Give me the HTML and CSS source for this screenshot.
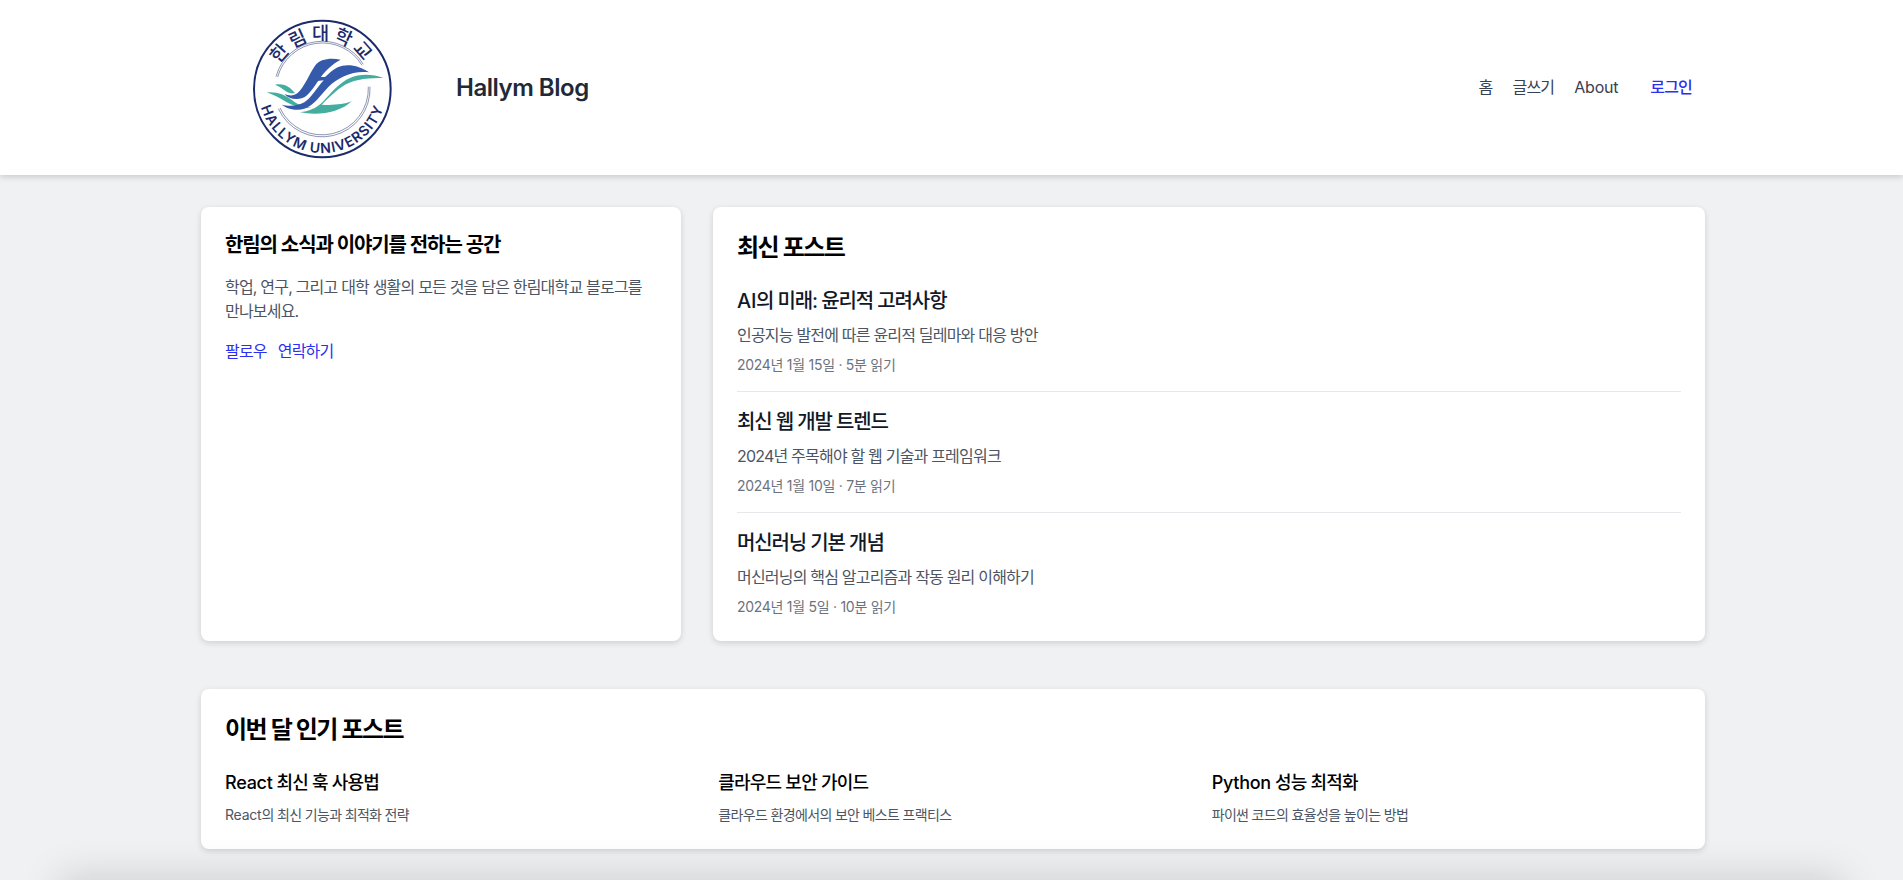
FILE: index.html
```html
<!DOCTYPE html>
<html lang="ko">
<head>
<meta charset="utf-8">
<title>Hallym Blog</title>
<link rel="stylesheet" href="styles.css">
</head>
<body>
<div class="page">
  <header class="site-header">
    <div class="brand">
      <svg class="logo" viewBox="0 0 480 450" role="img" aria-label="한림대학교 HALLYM UNIVERSITY">
        <defs>
          <path id="arc-top" d="M84 228 A148 148 0 0 1 380 228"/>
          <path id="arc-bottom" d="M40 228 A192 192 0 0 0 424 228"/>
        </defs>
        <circle class="ring" cx="232" cy="228" r="205"/>
        <path class="thin" d="M93 191 A144 144 0 0 1 355 154"/>
        <path class="thin" d="M98 192 A139 139 0 0 1 351 157"/>
        <path class="thin" d="M100 287 A144 144 0 0 0 375 221"/>
        <path class="thin" d="M105 285 A139 139 0 0 0 370 221"/>
        <text class="logo-ko"><textPath href="#arc-top" startOffset="50%" text-anchor="middle">한림대학교</textPath></text>
        <text class="logo-en"><textPath href="#arc-bottom" startOffset="50%" text-anchor="middle">HALLYM UNIVERSITY</textPath></text>
        <path class="teal" d="M90 215 C105 212 120 214 135 225 C142 232 146 236 150 240 C138 243 128 240 118 232 C108 224 100 219 90 215Z"/>
        <path class="teal" d="M65 238 C95 235 120 245 140 260 C158 275 180 283 200 282 C180 288 150 282 125 268 C105 255 85 245 65 238Z"/>
        <path class="blue" d="M287 140 C255 134 225 138 210 158 C192 184 178 222 158 240 C146 250 130 248 118 243 C130 256 150 262 170 256 C192 248 206 222 222 200 C236 178 262 152 287 140Z"/>
        <path class="blue" d="M372 178 C345 158 305 150 278 163 C262 171 250 184 240 192 L224 192 L216 204 L236 202 C214 226 200 254 178 268 C158 280 130 280 110 275 C126 288 156 294 178 287 C206 278 226 248 250 222 C280 192 325 172 372 178Z"/>
        <path class="teal" d="M415 195 C380 182 345 182 315 195 C285 207 258 240 235 265 C215 286 190 296 165 298 C200 305 240 303 270 293 C290 287 308 277 320 265 C295 275 262 277 230 275 C250 255 272 232 300 215 C335 197 375 195 415 195Z"/>
      </svg>
      <h1 class="site-title">Hallym Blog</h1>
    </div>
    <nav class="site-nav">
      <a class="nav-link" href="#">홈</a>
      <a class="nav-link" href="#">글쓰기</a>
      <a class="nav-link latin" href="#">About</a>
      <a class="nav-login" href="#">로그인</a>
    </nav>
  </header>

  <main class="content">
    <div class="top-row">
      <section class="card intro">
        <h2 class="intro-title">한림의 소식과 이야기를 전하는 공간</h2>
        <p class="intro-text">학업, 연구, 그리고 대학 생활의 모든 것을 담은 한림대학교 블로그를 만나보세요.</p>
        <div class="intro-links">
          <a class="link" href="#">팔로우</a>
          <a class="link" href="#">연락하기</a>
        </div>
      </section>

      <section class="card latest">
        <h2 class="section-title">최신 포스트</h2>
        <article class="post">
          <h3 class="post-title"><span class="latin">AI</span>의 미래: 윤리적 고려사항</h3>
          <p class="post-desc">인공지능 발전에 따른 윤리적 딜레마와 대응 방안</p>
          <p class="post-meta">2024년 1월 15일 · 5분 읽기</p>
        </article>
        <article class="post">
          <h3 class="post-title">최신 웹 개발 트렌드</h3>
          <p class="post-desc">2024년 주목해야 할 웹 기술과 프레임워크</p>
          <p class="post-meta">2024년 1월 10일 · 7분 읽기</p>
        </article>
        <article class="post">
          <h3 class="post-title">머신러닝 기본 개념</h3>
          <p class="post-desc">머신러닝의 핵심 알고리즘과 작동 원리 이해하기</p>
          <p class="post-meta">2024년 1월 5일 · 10분 읽기</p>
        </article>
      </section>
    </div>

    <section class="card popular">
      <h2 class="section-title">이번 달 인기 포스트</h2>
      <div class="popular-grid">
        <article>
          <h3 class="popular-title"><span class="latin">React</span> 최신 훅 사용법</h3>
          <p class="popular-desc"><span class="latin">React</span>의 최신 기능과 최적화 전략</p>
        </article>
        <article>
          <h3 class="popular-title">클라우드 보안 가이드</h3>
          <p class="popular-desc">클라우드 환경에서의 보안 베스트 프랙티스</p>
        </article>
        <article>
          <h3 class="popular-title"><span class="latin">Python</span> 성능 최적화</h3>
          <p class="popular-desc">파이썬 코드의 효율성을 높이는 방법</p>
        </article>
      </div>
    </section>
  </main>
  <footer class="site-footer"></footer>
</div>
</body>
</html>
```

FILE: styles.css
```css
* { box-sizing: border-box; }

html, body { margin: 0; padding: 0; }

body {
  background: #f0f1f3;
  font-family: Inter, "Noto Sans CJK KR", sans-serif;
  letter-spacing: -0.05em;
  color: #000;
}

h1, h2, h3, p { margin: 0; }

a { text-decoration: none; }

.latin { letter-spacing: -0.015em; }

.page {
  height: 880px;
  overflow: hidden;
}

/* Header */
.site-header {
  height: 175px;
  background: #fff;
  display: flex;
  align-items: center;
  justify-content: space-between;
  padding: 0 211px 0 245px;
  box-shadow: 0 2px 6px rgba(0, 0, 0, 0.16);
  position: relative;
}

.brand {
  display: flex;
  align-items: center;
  gap: 51px;
}

.logo {
  width: 160px;
  height: 150px;
  display: block;
}

.ring {
  fill: none;
  stroke: #1b2a6b;
  stroke-width: 6;
}

.thin {
  fill: none;
  stroke: #1b2a6b;
  stroke-width: 1.5;
}

.blue { fill: #3559ab; }

.teal { fill: #43ae9f; }

.logo-ko {
  font-family: "Noto Sans CJK KR", sans-serif;
  font-size: 56px;
  font-weight: 500;
  letter-spacing: 11px;
  fill: #1b2a6b;
}

.logo-en {
  font-family: Inter, sans-serif;
  font-size: 42px;
  font-weight: 600;
  letter-spacing: 3px;
  fill: #1b2a6b;
}

.site-title {
  font-size: 24px;
  line-height: 32px;
  font-weight: 600;
  letter-spacing: -0.02em;
  color: #1f2937;
}

.site-nav {
  display: flex;
  align-items: center;
  font-size: 16px;
  line-height: 24px;
  padding-bottom: 2px;
}

.nav-link {
  color: #374151;
  margin-right: 20px;
}

.nav-login {
  color: #2a2ff0;
  font-weight: 500;
  margin-left: 12px;
}

/* Content */
.content {
  width: 1504px;
  margin: 32px 0 0 201px;
}

.top-row {
  display: grid;
  grid-template-columns: 480px 1fr;
  gap: 32px;
  margin-bottom: 48px;
}

.card {
  background: #fff;
  border-radius: 8px;
  padding: 24px;
  box-shadow: 0 2px 6px rgba(0, 0, 0, 0.14);
}

.intro-title {
  font-size: 20px;
  line-height: 28px;
  font-weight: 600;
  letter-spacing: -0.055em;
  margin-bottom: 16px;
}

.intro-text {
  font-size: 16px;
  line-height: 24px;
  color: #4b5563;
  margin-bottom: 16px;
}

.intro-links {
  display: flex;
  gap: 11px;
  font-size: 16px;
  line-height: 24px;
}

.link { color: #2a2ff0; }

.section-title {
  font-size: 24px;
  line-height: 32px;
  font-weight: 600;
  letter-spacing: -0.063em;
  padding-top: 1px;
  margin-bottom: 23px;
}

.post {
  padding-bottom: 16px;
  margin-bottom: 16px;
  border-bottom: 1px solid #e5e7eb;
}

.post:last-child {
  padding-bottom: 0;
  margin-bottom: 0;
  border-bottom: 0;
}

.post-title {
  font-size: 20px;
  line-height: 28px;
  font-weight: 500;
  letter-spacing: -0.056em;
  color: #111827;
  margin-bottom: 8px;
}

.post-desc {
  font-size: 16px;
  line-height: 24px;
  color: #4b5563;
  margin-bottom: 8px;
}

.post-meta {
  font-size: 14px;
  line-height: 20px;
  letter-spacing: -0.02em;
  color: #6b7280;
}

.popular-grid {
  display: grid;
  grid-template-columns: repeat(3, 1fr);
  gap: 24px;
}

.popular-title {
  font-size: 18px;
  line-height: 28px;
  font-weight: 500;
  margin-bottom: 8px;
}

.popular-desc {
  font-size: 14px;
  line-height: 20px;
  letter-spacing: -0.047em;
  color: #4b5563;
}

/* Footer sits just below the fold: only its shadow shows */
.site-footer {
  height: 60px;
  margin: 36px 60px 0;
  background: #dcdde0;
  box-shadow: 0 -8px 40px rgba(0, 0, 0, 0.15);
}
```
